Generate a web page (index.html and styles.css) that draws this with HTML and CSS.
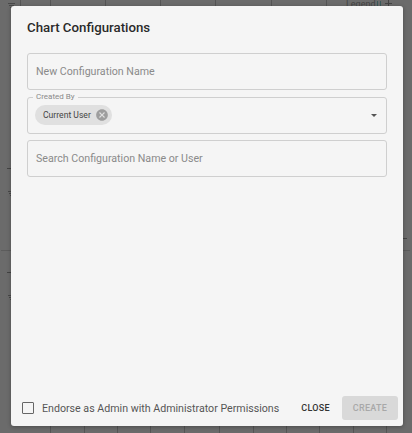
FILE: index.html
```html
<!DOCTYPE html>
<html lang="en">
<head>
    <meta charset="UTF-8">
    <meta name="viewport" content="width=device-width, initial-scale=1.0">
    <link rel="stylesheet" href="styles.css">
</head>
<body>
    <!-- chart page dimmed behind the dialog -->
    <div class="backdrop">
        <span class="tick tick-top" style="left: 20px"></span>
        <span class="tick tick-top" style="left: 50px"></span>
        <span class="tick tick-top" style="left: 105px"></span>
        <span class="tick tick-top" style="left: 160px"></span>
        <span class="tick tick-top" style="left: 215px"></span>
        <span class="tick tick-top" style="left: 271px"></span>
        <span class="tick tick-top" style="left: 326px"></span>
        <span class="tick tick-bottom" style="left: 50px"></span>
        <span class="tick tick-bottom" style="left: 84px"></span>
        <span class="tick tick-bottom" style="left: 117px"></span>
        <span class="tick tick-bottom" style="left: 150px"></span>
        <span class="tick tick-bottom" style="left: 184px"></span>
        <span class="tick tick-bottom" style="left: 219px"></span>
        <span class="tick tick-bottom" style="left: 253px"></span>
        <span class="tick tick-bottom" style="left: 286px"></span>
        <span class="tick tick-bottom" style="left: 319px"></span>
        <span class="tick tick-bottom" style="left: 353px"></span>
        <span class="tick tick-bottom" style="left: 386px"></span>
        <span class="dash" style="top: 168px"></span>
        <span class="dash" style="top: 272px"></span>
        <span class="grid-line" style="top: 250px; left: 1px; width: 10px"></span>
        <span class="grid-line" style="top: 250px; left: 403px; width: 7px"></span>
        <span class="dash" style="top: 238px; left: 403px"></span>
        <svg class="sort-icon" style="top: 3px" viewBox="0 0 8 6"><path d="M0 0h7v1H0zM1 2h5v1H1zM2 4h3v1H2z"/></svg>
        <svg class="sort-icon" style="top: 191px" viewBox="0 0 8 6"><path d="M0 0h7v1H0zM1 2h5v1H1zM2 4h3v1H2z"/></svg>
        <svg class="sort-icon" style="top: 295px" viewBox="0 0 8 6"><path d="M0 0h7v1H0zM1 2h5v1H1zM2 4h3v1H2z"/></svg>
        <span class="legend">Legend</span>
        <svg class="legend-icon" viewBox="0 0 18 7"><path d="M2 1v5h1V1zM5 1v5h1V1z" fill="#3b5a5a"/><path d="M13 0h1v6h-1zM10 3h7v1h-7z"/></svg>
    </div>

    <div class="dialog">
        <h2>Chart Configurations</h2>
        <div class="fields">
            <div class="field">
                <span class="placeholder">New Configuration Name</span>
            </div>
            <div class="field field-select">
                <span class="field-label">Created By</span>
                <span class="chip">
                    Current User
                    <svg class="chip-icon" viewBox="0 0 24 24">
                        <path d="M12 2C6.47 2 2 6.47 2 12s4.47 10 10 10 10-4.47 10-10S17.53 2 12 2zm5 13.59L15.59 17 12 13.41 8.41 17 7 15.59 10.59 12 7 8.41 8.41 7 12 10.59 15.59 7 17 8.41 13.41 12 17 15.59z"/>
                    </svg>
                </span>
                <span class="arrow"></span>
            </div>
            <div class="field">
                <span class="placeholder">Search Configuration Name or User</span>
            </div>
        </div>
        <div class="footer">
            <span class="checkbox"></span>
            <span class="endorse">Endorse as Admin with Administrator Permissions</span>
            <button class="button-close">Close</button>
            <button class="button-create" disabled>Create</button>
        </div>
    </div>
</body>
</html>
```

FILE: styles.css
```css
* {
    margin: 0;
    padding: 0;
    box-sizing: border-box;
    font-family: Roboto, sans-serif;
}
body {
    background: #6b6b6b;
    width: 412px;
    height: 433px;
    overflow: hidden;
    padding: 6px 9px 7px 11px;
}
.backdrop {
    position: absolute;
    top: 0;
    left: 0;
    width: 412px;
    height: 433px;
}
.tick {
    position: absolute;
    width: 1px;
    background: #555;
}
.tick-top {
    top: 0;
    height: 6px;
}
.tick-bottom {
    bottom: 0;
    height: 7px;
}
.dash {
    position: absolute;
    left: 7px;
    width: 4px;
    height: 1px;
    background: #444;
}
.grid-line {
    position: absolute;
    height: 1px;
    background: #5c5c5c;
}
.sort-icon {
    position: absolute;
    left: 8px;
    width: 8px;
    height: 6px;
    fill: #484848;
}
.legend {
    position: absolute;
    top: 0;
    left: 346px;
    font-size: 9px;
    line-height: 9px;
    color: #444;
}
.legend-icon {
    position: absolute;
    top: 0;
    left: 375px;
    width: 18px;
    height: 7px;
    fill: #444;
}

.dialog {
    position: relative;
    display: flex;
    flex-direction: column;
    height: 420px;
    background: #f5f5f5;
    border-radius: 3px;
    box-shadow: 0 1px 4px rgba(0, 0, 0, 0.3);
    padding: 14px 16px 6px 16px;
}
.dialog h2 {
    font-size: 13.25px;
    font-weight: 500;
    line-height: 16px;
    color: #2a2a2a;
    margin-bottom: 17px;
}
.fields {
    display: flex;
    flex-direction: column;
    gap: 6.5px;
    flex: 1;
}
.field {
    position: relative;
    display: flex;
    align-items: center;
    height: 37px;
    border: 1px solid #cfcfcf;
    border-radius: 3px;
    padding: 0 8px;
}
.field-select {
    padding: 0 7px;
}
.placeholder {
    font-size: 10.65px;
    color: #8a8a8a;
}
.field-label {
    position: absolute;
    top: -6px;
    left: 5px;
    padding: 0 3px;
    background: #f5f5f5;
    font-size: 8px;
    line-height: 10px;
    color: #8a8a8a;
}
.chip {
    display: flex;
    align-items: center;
    gap: 4px;
    height: 20px;
    border-radius: 10px;
    background: #e0e0e0;
    padding: 0 3px 0 8px;
    font-size: 8.6px;
    color: #444;
}
.chip-icon {
    width: 14px;
    height: 14px;
    fill: #9e9e9e;
}
.arrow {
    position: absolute;
    right: 9px;
    top: 16px;
    border-left: 3.5px solid transparent;
    border-right: 3.5px solid transparent;
    border-top: 3.5px solid #555;
}

.footer {
    display: flex;
    align-items: center;
    height: 24px;
}
.checkbox {
    width: 12px;
    height: 12px;
    border: 1.5px solid #666;
    border-radius: 1px;
    margin-left: -5px;
    margin-right: 8px;
}
.endorse {
    font-size: 10.65px;
    color: #555;
    white-space: nowrap;
}
.footer button {
    border: none;
    background: none;
    font-size: 9px;
    font-weight: 500;
    letter-spacing: 0.3px;
    text-transform: uppercase;
}
.footer .button-close {
    margin-left: auto;
    margin-right: 12px;
    color: #333;
}
.footer .button-create {
    width: 56px;
    height: 24px;
    margin-right: -11px;
    background: #d9d9d9;
    border-radius: 3px;
    color: #a8a8a8;
}
```
